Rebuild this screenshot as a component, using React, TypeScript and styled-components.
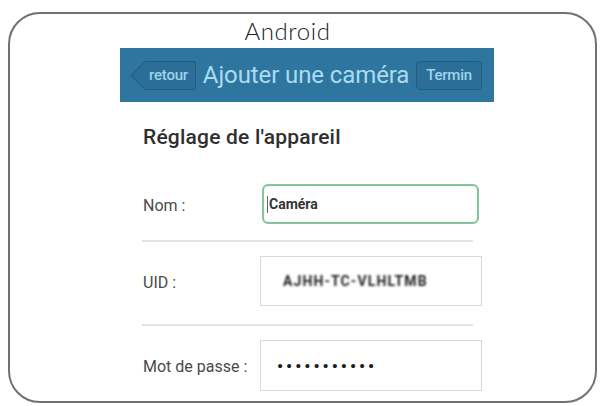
import React from "react";
import styled, { createGlobalStyle } from "styled-components";

const Global = createGlobalStyle`
  html, body { margin: 0; padding: 0; background: #ffffff; }
  body { font-family: Roboto, "Liberation Sans", sans-serif; }
  * { box-sizing: border-box; }
`;

const Frame = styled.div`
  margin: 12px 0 0 8px;
  width: 589px;
  height: 391px;
  border: 2px solid #717171;
  border-radius: 32px;
  display: flex;
  flex-direction: column;
  overflow: hidden;
`;

const DeviceTitle = styled.div`
  align-self: center;
  margin: 3px 0 0 -30px;
  font-family: Lato, "Open Sans", sans-serif;
  font-weight: 300;
  font-size: 24px;
  line-height: 28px;
  letter-spacing: 0.6px;
  color: #222;
`;

const Screen = styled.div`
  margin-left: 110px;
  width: 374px;
  display: flex;
  flex-direction: column;
`;

const AppBar = styled.div`
  margin-top: 3px;
  height: 54px;
  background: #2e76a0;
  display: flex;
  align-items: center;
  justify-content: space-between;
  padding: 0 12px 0 25px;
`;

const BarButton = styled.div<{ $back?: boolean }>`
  position: relative;
  height: 29px;
  padding: ${(p) => (p.$back ? "0 7px 0 4px" : "0 9px")};
  display: flex;
  align-items: center;
  background: #2b6f98;
  border: 1px solid #205d80;
  border-radius: ${(p) => (p.$back ? "0 3px 3px 0" : "4px")};
  border-left: ${(p) => (p.$back ? "none" : "1px solid #205d80")};
  color: #9fd3ea;
  font-size: 15px;
  font-weight: 500;
  letter-spacing: -0.2px;
  ${(p) =>
    p.$back
      ? `
    &::before {
      content: "";
      position: absolute;
      left: -10px;
      top: 3.5px;
      width: 20px;
      height: 20px;
      background: #2b6f98;
      border-left: 1px solid #205d80;
      border-bottom: 1px solid #205d80;
      transform: rotate(45deg);
    }
  `
      : ""}
`;

const ButtonLabel = styled.span`
  position: relative;
`;

const BarTitle = styled.div`
  font-size: 24px;
  color: #a9dcef;
  white-space: nowrap;
  letter-spacing: -0.1px;
`;

const Form = styled.div`
  padding-left: 23px;
  display: flex;
  flex-direction: column;
`;

const Heading = styled.div`
  margin-top: 24px;
  font-size: 21px;
  line-height: 22px;
  font-weight: 500;
  letter-spacing: 0.2px;
  color: #2f2f2f;
`;

const Row = styled.div<{ $top: number }>`
  margin-top: ${(p) => p.$top}px;
  display: flex;
  align-items: center;
`;

const Label = styled.div`
  width: 117px;
  flex: none;
  font-size: 16px;
  color: #4a4a4a;
  padding-top: 2px;
`;

const Field = styled.div<{ $w: number; $h: number; $focus?: boolean; $shift?: number }>`
  width: ${(p) => p.$w}px;
  height: ${(p) => p.$h}px;
  margin-left: ${(p) => p.$shift ?? 0}px;
  display: flex;
  align-items: center;
  background: #ffffff;
  border: ${(p) => (p.$focus ? "2px solid #86c59b" : "1px solid #d9d9d9")};
  border-radius: ${(p) => (p.$focus ? "6px" : "0")};
  box-shadow: ${(p) =>
    p.$focus ? "inset 0 0 2px rgba(0,0,0,0.12)" : "inset 0 0 1px rgba(0,0,0,0.05)"};
`;

const Caret = styled.span`
  width: 1px;
  height: 17px;
  background: #666;
  margin: 0 1px 0 3px;
`;

const Value = styled.span`
  font-size: 14px;
  font-weight: 700;
  color: #333;
`;

const Blurred = styled.span`
  padding-left: 22px;
  font-size: 14px;
  font-weight: 700;
  color: #222;
  letter-spacing: 1.1px;
  filter: blur(1.1px);
`;

const Dots = styled.span`
  padding-left: 16px;
  font-size: 17px;
  font-weight: 700;
  color: #1e1e1e;
  letter-spacing: 3px;
`;

const Separator = styled.div<{ $top: number }>`
  margin-top: ${(p) => p.$top}px;
  margin-left: -1px;
  width: 331px;
  height: 2px;
  background: #e2e2e2;
`;

export default function App() {
  return (
    <>
      <Global />
      <Frame>
        <DeviceTitle>Android</DeviceTitle>
        <Screen>
          <AppBar>
            <BarButton $back>
              <ButtonLabel>retour</ButtonLabel>
            </BarButton>
            <BarTitle>Ajouter une caméra</BarTitle>
            <BarButton>
              <ButtonLabel>Termin</ButtonLabel>
            </BarButton>
          </AppBar>
          <Form>
            <Heading>Réglage de l'appareil</Heading>
            <Row $top={36}>
              <Label>Nom :</Label>
              <Field $w={217} $h={40} $focus $shift={2}>
                <Caret />
                <Value>Caméra</Value>
              </Field>
            </Row>
            <Separator $top={16} />
            <Row $top={14}>
              <Label>UID :</Label>
              <Field $w={222} $h={50}>
                <Blurred>AJHH-TC-VLHLTMB</Blurred>
              </Field>
            </Row>
            <Separator $top={18} />
            <Row $top={14}>
              <Label>Mot de passe :</Label>
              <Field $w={222} $h={51}>
                <Dots>•••••••••••</Dots>
              </Field>
            </Row>
          </Form>
        </Screen>
      </Frame>
    </>
  );
}
